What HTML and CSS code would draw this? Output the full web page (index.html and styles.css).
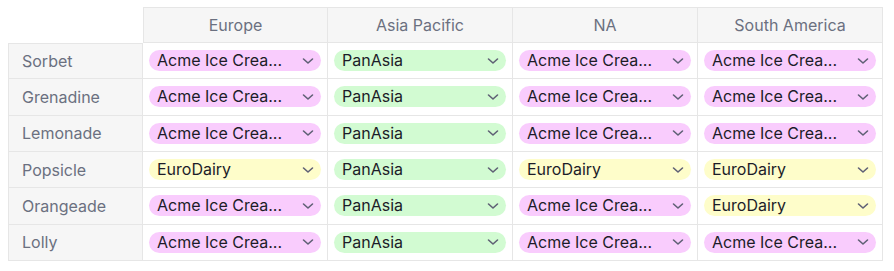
FILE: index.html
```html
<!DOCTYPE html>
<html>
<head>
<meta charset="utf-8">
<link rel="stylesheet" href="styles.css">
</head>
<body>
<div class="grid">
  <div class="corner"></div>
  <div class="head first">Europe</div>
  <div class="head">Asia Pacific</div>
  <div class="head">NA</div>
  <div class="head">South America</div>

  <div class="label top">Sorbet</div>
  <div class="cell"><span class="pill acme">Acme Ice Crea...<svg class="chev" viewBox="0 0 12 12"><path d="M1.5 4 6 8 10.5 4"/></svg></span></div>
  <div class="cell"><span class="pill pan">PanAsia<svg class="chev" viewBox="0 0 12 12"><path d="M1.5 4 6 8 10.5 4"/></svg></span></div>
  <div class="cell"><span class="pill acme">Acme Ice Crea...<svg class="chev" viewBox="0 0 12 12"><path d="M1.5 4 6 8 10.5 4"/></svg></span></div>
  <div class="cell"><span class="pill acme">Acme Ice Crea...<svg class="chev" viewBox="0 0 12 12"><path d="M1.5 4 6 8 10.5 4"/></svg></span></div>

  <div class="label">Grenadine</div>
  <div class="cell"><span class="pill acme">Acme Ice Crea...<svg class="chev" viewBox="0 0 12 12"><path d="M1.5 4 6 8 10.5 4"/></svg></span></div>
  <div class="cell"><span class="pill pan">PanAsia<svg class="chev" viewBox="0 0 12 12"><path d="M1.5 4 6 8 10.5 4"/></svg></span></div>
  <div class="cell"><span class="pill acme">Acme Ice Crea...<svg class="chev" viewBox="0 0 12 12"><path d="M1.5 4 6 8 10.5 4"/></svg></span></div>
  <div class="cell"><span class="pill acme">Acme Ice Crea...<svg class="chev" viewBox="0 0 12 12"><path d="M1.5 4 6 8 10.5 4"/></svg></span></div>

  <div class="label">Lemonade</div>
  <div class="cell"><span class="pill acme">Acme Ice Crea...<svg class="chev" viewBox="0 0 12 12"><path d="M1.5 4 6 8 10.5 4"/></svg></span></div>
  <div class="cell"><span class="pill pan">PanAsia<svg class="chev" viewBox="0 0 12 12"><path d="M1.5 4 6 8 10.5 4"/></svg></span></div>
  <div class="cell"><span class="pill acme">Acme Ice Crea...<svg class="chev" viewBox="0 0 12 12"><path d="M1.5 4 6 8 10.5 4"/></svg></span></div>
  <div class="cell"><span class="pill acme">Acme Ice Crea...<svg class="chev" viewBox="0 0 12 12"><path d="M1.5 4 6 8 10.5 4"/></svg></span></div>

  <div class="label">Popsicle</div>
  <div class="cell"><span class="pill euro">EuroDairy<svg class="chev" viewBox="0 0 12 12"><path d="M1.5 4 6 8 10.5 4"/></svg></span></div>
  <div class="cell"><span class="pill pan">PanAsia<svg class="chev" viewBox="0 0 12 12"><path d="M1.5 4 6 8 10.5 4"/></svg></span></div>
  <div class="cell"><span class="pill euro">EuroDairy<svg class="chev" viewBox="0 0 12 12"><path d="M1.5 4 6 8 10.5 4"/></svg></span></div>
  <div class="cell"><span class="pill euro">EuroDairy<svg class="chev" viewBox="0 0 12 12"><path d="M1.5 4 6 8 10.5 4"/></svg></span></div>

  <div class="label">Orangeade</div>
  <div class="cell"><span class="pill acme">Acme Ice Crea...<svg class="chev" viewBox="0 0 12 12"><path d="M1.5 4 6 8 10.5 4"/></svg></span></div>
  <div class="cell"><span class="pill pan">PanAsia<svg class="chev" viewBox="0 0 12 12"><path d="M1.5 4 6 8 10.5 4"/></svg></span></div>
  <div class="cell"><span class="pill acme">Acme Ice Crea...<svg class="chev" viewBox="0 0 12 12"><path d="M1.5 4 6 8 10.5 4"/></svg></span></div>
  <div class="cell"><span class="pill euro">EuroDairy<svg class="chev" viewBox="0 0 12 12"><path d="M1.5 4 6 8 10.5 4"/></svg></span></div>

  <div class="label">Lolly</div>
  <div class="cell"><span class="pill acme">Acme Ice Crea...<svg class="chev" viewBox="0 0 12 12"><path d="M1.5 4 6 8 10.5 4"/></svg></span></div>
  <div class="cell"><span class="pill pan">PanAsia<svg class="chev" viewBox="0 0 12 12"><path d="M1.5 4 6 8 10.5 4"/></svg></span></div>
  <div class="cell"><span class="pill acme">Acme Ice Crea...<svg class="chev" viewBox="0 0 12 12"><path d="M1.5 4 6 8 10.5 4"/></svg></span></div>
  <div class="cell"><span class="pill acme">Acme Ice Crea...<svg class="chev" viewBox="0 0 12 12"><path d="M1.5 4 6 8 10.5 4"/></svg></span></div>
</div>
</body>
</html>
```

FILE: styles.css
```css
* { box-sizing: border-box; }
body {
  margin: 0;
  padding: 7px 0 0 8px;
  background: #fff;
  font-family: Inter, "Noto Sans", sans-serif;
  font-size: 16px;
}
.grid {
  display: grid;
  grid-template-columns: 135px 185px 185px 185px 185px;
  grid-template-rows: 36px repeat(6, 36.33px);
  width: 875px;
}
.corner { background: #fff; }
.head {
  background: #f6f6f6;
  border-top: 1px solid #e6e6e6;
  border-right: 1px solid #e6e6e6;
  border-bottom: 1px solid #e6e6e6;
  color: #6b7080;
  display: flex;
  align-items: center;
  justify-content: center;
}
.head.first { border-left: 1px solid #e6e6e6; }
.label {
  background: #f6f6f6;
  border-left: 1px solid #e6e6e6;
  border-bottom: 1px solid #e6e6e6;
  color: #6b7080;
  display: flex;
  align-items: center;
  padding-left: 13px;
}
.label.top { border-top: 1px solid #e6e6e6; }
.cell {
  border-right: 1px solid #e6e6e6;
  border-bottom: 1px solid #e6e6e6;
  border-left: 1px solid #e6e6e6;
  margin-left: -1px;
  display: flex;
  align-items: center;
  padding: 0 6px 0 6px;
}
.pill {
  flex: 1;
  height: 21px;
  border-radius: 11px;
  display: flex;
  align-items: center;
  justify-content: space-between;
  padding: 0 7px 0 8px;
  color: #1c1c28;
  line-height: 21px;
}
.acme { background: #f9ccfd; }
.pan { background: #d2fbd2; }
.euro { background: #fefdca; }
.chev {
  width: 12px;
  height: 12px;
  fill: none;
  stroke: #5f6075;
  stroke-width: 1.6;
  stroke-linecap: round;
  stroke-linejoin: round;
}
```
